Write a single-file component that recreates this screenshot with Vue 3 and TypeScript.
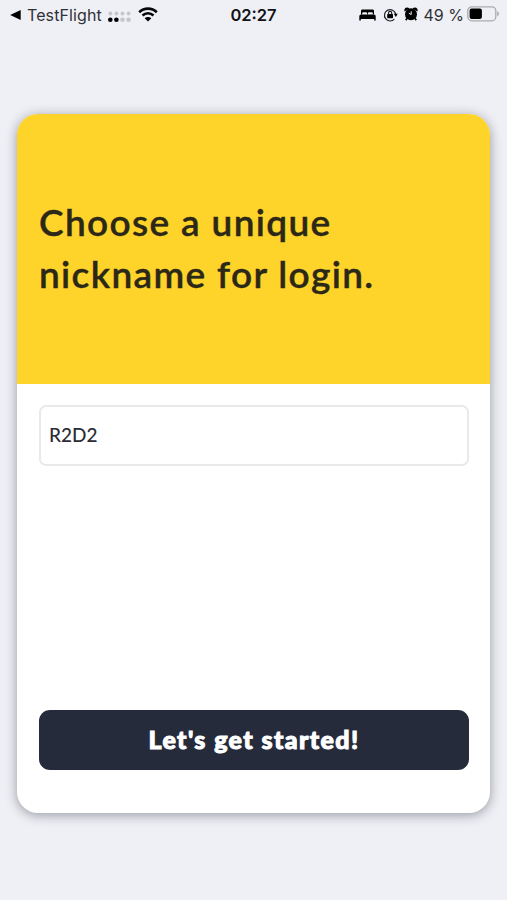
<script setup lang="ts">
import { ref } from 'vue'

const nickname = ref('R2D2')
const signalDots = [0, 1, 2, 3]
const titleLines = ['Choose a unique', 'nickname for login.']
</script>

<template>
  <main class="screen">
    <header class="status">
      <div class="side left">
        <svg class="back" width="11" height="10" viewBox="0 0 11 10"><path d="M.2 5 10.7 0v10z" /></svg>
        <span class="app-name">TestFlight</span>
        <svg class="signal" width="23" height="12" viewBox="0 0 23 12">
          <g v-for="i in signalDots" :key="i">
            <circle class="dim" :cx="2.3 + i * 6.1" cy="2.5" r="1.9" />
            <circle :class="{ dim: i > 1 }" :cx="2.3 + i * 6.1" cy="8.8" r="2.3" />
          </g>
        </svg>
        <svg class="wifi" width="20" height="15" viewBox="0 0 20 15">
          <path class="arc" d="M1.2 5.2a12.6 12.6 0 0 1 17.6 0M4.5 8.5a8 8 0 0 1 11 0" />
          <path d="M10 14.6 6.7 11.3a4.7 4.7 0 0 1 6.6 0z" />
        </svg>
      </div>
      <time class="clock">02:27</time>
      <div class="side right">
        <svg class="bed" width="17" height="12" viewBox="0 0 17 12">
          <path d="M2 5.2V2Q2 .6 3.5.6h10Q15 .6 15 2v3.2h-1.2V4q0-.8-1-.8H9.9q-1 0-1 .8v1.2h-.8V4q0-.8-1-.8H4.2q-1 0-1 .8v1.2zM.3 7.3Q.3 5.5 2 5.5h13q1.7 0 1.7 1.8v4.2h-1.5V9.9H1.8v1.6H.3z" />
        </svg>
        <svg class="lock" width="15" height="14" viewBox="0 0 15 14">
          <path class="line" d="M11.4 11.1A5.7 5.7 0 1 1 12.7 6" />
          <path d="M10.8 5.8h4l-2 3.1z" />
          <rect x="4.2" y="6.1" width="5.8" height="4.2" rx=".7" />
          <path class="line" d="M5.5 6.3V5a1.6 1.6 0 0 1 3.2 0v1.3" />
        </svg>
        <svg class="alarm" width="14" height="14" viewBox="0 0 14 14">
          <path d="M.5 4.5Q-.1 1.4 1.8.7T5.6 1.6zM13.5 4.5Q14.1 1.4 12.2.7T8.4 1.6z" />
          <circle cx="7" cy="7.3" r="6" />
          <path class="feet" d="m3.2 11.3-1.5 1.8m9.1-1.8 1.5 1.8" />
          <path class="hands" d="M7.2 4.3v3.3L4.8 6.2" />
        </svg>
        <span class="percent">49 %</span>
        <svg class="battery" width="33" height="16" viewBox="0 0 33 16">
          <rect class="shell" x=".8" y=".8" width="28" height="14" rx="4" />
          <rect x="2.6" y="2.6" width="12.3" height="10.4" rx="2" />
          <path class="cap" d="M30.2 5.3q1.8.8 1.8 2.5t-1.8 2.5z" />
        </svg>
      </div>
    </header>

    <section class="card">
      <div class="hero">
        <h1 class="title"><span v-for="line in titleLines" :key="line" class="line-text">{{ line }}</span></h1>
      </div>
      <form class="body" @submit.prevent>
        <input v-model="nickname" class="field" type="text" aria-label="Nickname" />
        <button class="submit" type="submit">Let's get started!</button>
      </form>
    </section>
  </main>
</template>

<style>
body {
  margin: 0;
  background: #eff0f5;
}
</style>

<style scoped>
.screen {
  box-sizing: border-box;
  height: 900px;
  padding: 0 17px;
  background: #eff0f5;
  overflow: hidden;
}
.status {
  display: grid;
  grid-template-columns: 1fr auto 1fr;
  align-items: center;
  height: 30px;
  margin: 0 -10px;
  color: #111216;
  font: 17px/30px Inter, sans-serif;
}
.side {
  display: flex;
  align-items: center;
}
.left {
  padding-left: 3px;
}
.right {
  justify-content: flex-end;
}
svg {
  display: block;
  flex: none;
}
.app-name {
  width: 75px;
  margin-left: 6px;
  font-size: 16px;
  letter-spacing: 0.1px;
  color: #303136;
}
.signal {
  margin: 4px 0 0 6px;
}
.dim {
  fill: #c5c6cb;
}
.wifi {
  margin-left: 7px;
  margin-top: -1px;
}
.arc {
  fill: none;
  stroke: #08080a;
  stroke-width: 2.6;
}
.clock {
  font-size: 16.5px;
  font-weight: 600;
}
.lock {
  margin-left: 7px;
}
.line {
  fill: none;
  stroke: #222327;
  stroke-width: 1.2;
}
.alarm {
  margin: -2px 0 0 6px;
}
.feet {
  stroke: #08080a;
  stroke-width: 1.7;
}
.hands {
  fill: none;
  stroke: #eff0f5;
  stroke-width: 1;
}
.percent {
  margin-left: 6px;
  font-size: 16px;
  white-space: nowrap;
  color: #303136;
}
.battery {
  margin: -2px 0 0 3px;
}
.shell {
  fill: none;
  stroke: #a9aaae;
  stroke-width: 1.3;
}
.cap {
  fill: #a9aaae;
}
.card {
  display: flex;
  flex-direction: column;
  height: 699px;
  margin-top: 84px;
  border-radius: 21px;
  background: #fff;
  box-shadow: 0 2px 12px rgba(28, 30, 48, 0.42);
}
.hero {
  display: flex;
  align-items: center;
  height: 270px;
  padding: 0 22px;
  border-radius: 21px 21px 0 0;
  background: #fed42b;
}
.title {
  margin: -2px 0 0;
  color: #2c2817;
  font: 600 37px/52px Lato, sans-serif;
  letter-spacing: 1.35px;
  -webkit-text-stroke: 0.4px #2c2817;
}
.line-text {
  display: block;
  white-space: nowrap;
}
.body {
  display: flex;
  flex: 1;
  flex-direction: column;
  justify-content: space-between;
  padding: 21px 21px 43px 22px;
}
.field {
  box-sizing: border-box;
  width: 100%;
  height: 61px;
  padding: 0 8px 2px;
  border: 2px solid #e9e9eb;
  border-radius: 7px;
  outline: none;
  background: #fff;
  color: #2b2c34;
  font: 500 19px Lato, sans-serif;
}
.submit {
  height: 60px;
  padding: 0 0 2px;
  border: 0;
  border-radius: 11px;
  background: #262b3b;
  color: #fff;
  font: 900 25px Lato, sans-serif;
  letter-spacing: 1.4px;
  -webkit-text-stroke: 1px #fff;
}
</style>
